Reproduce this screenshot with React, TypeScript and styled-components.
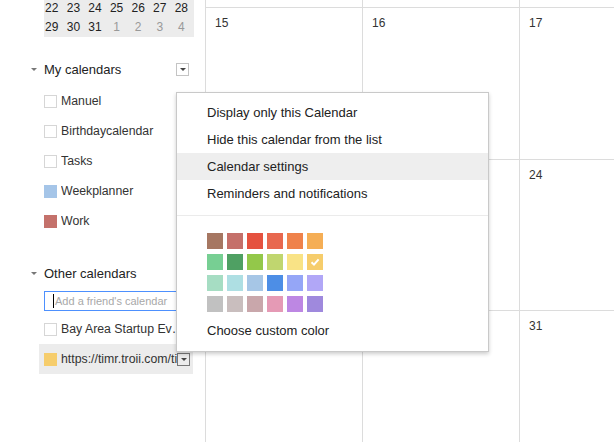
import styled, { createGlobalStyle } from "styled-components";

const GlobalStyle = createGlobalStyle`
  * {
    box-sizing: border-box;
  }
  body {
    margin: 0;
    background: #fff;
    font-family: "Liberation Sans", Arial, sans-serif;
    color: #222;
  }
`;

const Page = styled.div`
  position: relative;
  display: flex;
  width: 614px;
  height: 442px;
  overflow: hidden;
  background: #fff;
`;

const Sidebar = styled.aside`
  width: 205px;
  flex-shrink: 0;
  display: flex;
  flex-direction: column;
`;

const MiniCal = styled.div`
  margin: -2px 0 0 44px;
  width: 150px;
  background: #ececec;
  padding-bottom: 1px;
`;

const MiniWeek = styled.div`
  display: grid;
  grid-template-columns: repeat(7, 21.6px);
  margin-left: -3px;
  height: 19px;
  align-items: center;
`;

const MiniDay = styled.span<{ $muted?: boolean }>`
  text-align: center;
  font-size: 12px;
  color: ${(p) => (p.$muted ? "#999" : "#222")};
`;

const SectionHeader = styled.div<{ $top: number }>`
  display: flex;
  align-items: center;
  height: 20px;
  margin-top: ${(p) => p.$top}px;
  padding-left: 31px;
  width: 189px;
`;

const Caret = styled.span`
  width: 0;
  height: 0;
  border-left: 3px solid transparent;
  border-right: 3px solid transparent;
  border-top: 3px solid #777;
  margin-right: 7px;
`;

const SectionTitle = styled.span`
  font-size: 13px;
  color: #222;
`;

const DropButton = styled.button<{ $dark?: boolean }>`
  width: 13px;
  height: 13px;
  padding: 0;
  margin-left: auto;
  flex-shrink: 0;
  display: flex;
  align-items: center;
  justify-content: center;
  background: transparent;
  border: 1px solid ${(p) => (p.$dark ? "#777" : "#c4c4c4")};

  &::after {
    content: "";
    border-left: 3px solid transparent;
    border-right: 3px solid transparent;
    border-top: 3px solid #444;
  }
`;

const CalList = styled.div<{ $top: number }>`
  display: flex;
  flex-direction: column;
  margin-top: ${(p) => p.$top}px;
`;

const CalRow = styled.div<{ $selected?: boolean }>`
  display: flex;
  align-items: center;
  height: 30px;
  width: 154px;
  margin-left: 39px;
  padding: 0 ${(p) => (p.$selected ? 3 : 7)}px 0 5px;
  background: ${(p) => (p.$selected ? "#ececec" : "transparent")};
`;

const Swatch = styled.span<{ $color?: string }>`
  width: 13px;
  height: 13px;
  flex-shrink: 0;
  background: ${(p) => p.$color || "#fff"};
  border: ${(p) => (p.$color ? "none" : "1px solid #d6d6d6")};
`;

const CalName = styled.span<{ $clip?: boolean }>`
  flex: 1;
  min-width: 0;
  margin-left: 4px;
  font-size: 12.3px;
  color: #333;
  white-space: nowrap;
  overflow: hidden;
  text-overflow: ${(p) => (p.$clip ? "clip" : "ellipsis")};
`;

const FriendField = styled.div`
  display: flex;
  align-items: center;
  margin: 8px 0 0 44px;
  width: 150px;
  height: 20px;
  padding-left: 8px;
  border: 1px solid #4d90fe;
`;

const TextCursor = styled.span`
  width: 1px;
  height: 14px;
  background: #000;
  margin-right: 1px;
`;

const Placeholder = styled.span`
  font-size: 11px;
  color: #a8a8a8;
  white-space: nowrap;
`;

const MonthGrid = styled.div`
  flex: 1;
  display: grid;
  grid-template-columns: repeat(4, 157px);
  grid-template-rows: 8px 152px 151px 160px;
  border-left: 1px solid #dcdcdc;
  overflow: hidden;
`;

const DayCell = styled.div`
  border-right: 1px solid #dcdcdc;
  border-bottom: 1px solid #dcdcdc;
  padding: 5px 0 0 9px;
  overflow: hidden;
`;

const DayNum = styled.span`
  font-size: 12px;
  line-height: 14px;
  color: #333;
`;

const Menu = styled.div`
  position: absolute;
  left: 176px;
  top: 92px;
  width: 313px;
  height: 260px;
  background: #fff;
  border: 1px solid #c9c9c9;
  box-shadow: 0 2px 4px rgba(0, 0, 0, 0.2);
  padding-top: 6px;
`;

const MenuItem = styled.div<{ $active?: boolean }>`
  height: 27px;
  line-height: 27px;
  padding-left: 30px;
  font-size: 13px;
  color: #222;
  background: ${(p) => (p.$active ? "#eeeeee" : "transparent")};
`;

const Separator = styled.div`
  margin-top: 8px;
  border-top: 1px solid #ebebeb;
`;

const Palette = styled.div`
  display: grid;
  grid-template-columns: repeat(6, 16px);
  column-gap: 4px;
  row-gap: 5px;
  margin: 17px 0 0 30px;
`;

const Chip = styled.div<{ $color: string }>`
  width: 16px;
  height: 16px;
  background: ${(p) => p.$color};
  display: flex;
  align-items: center;
  justify-content: center;
`;

const CustomColor = styled.div`
  margin-top: 11px;
  padding-left: 30px;
  line-height: 16px;
  font-size: 13px;
  color: #222;
`;

const miniWeeks = [
  [["22"], ["23"], ["24"], ["25"], ["26"], ["27"], ["28"]],
  [["29"], ["30"], ["31"], ["1", "m"], ["2", "m"], ["3", "m"], ["4", "m"]],
];

const myCalendars = [
  { name: "Manuel" },
  { name: "Birthdaycalendar" },
  { name: "Tasks" },
  { name: "Weekplanner", color: "#a5c5e8" },
  { name: "Work", color: "#c4716b" },
];

// only the dates not hidden behind the menu get a label
const days = [
  "", "", "", "",
  "15", "16", "17", "",
  "", "", "24", "",
  "", "", "31", "",
];

const menuItems = [
  "Display only this Calendar",
  "Hide this calendar from the list",
  "Calendar settings",
  "Reminders and notifications",
];

const colors = [
  "#a67762", "#c5706a", "#e5523f", "#e8684f", "#ef824b", "#f5ae55",
  "#77cf93", "#4fa063", "#93c84a", "#c0d66f", "#f9e386", "#f6cd6c",
  "#a6ddc3", "#aedfe3", "#a6c6e6", "#4d8ee6", "#95a6f7", "#b1a7f7",
  "#c1c1c1", "#c9bebe", "#c9a7ab", "#e59ab5", "#bd87e3", "#9f89dd",
];

function App() {
  return (
    <>
      <GlobalStyle />
      <Page>
        <Sidebar>
          <MiniCal>
            {miniWeeks.map((week, i) => (
              <MiniWeek key={i}>
                {week.map(([d, m]) => (
                  <MiniDay key={d} $muted={m === "m"}>
                    {d}
                  </MiniDay>
                ))}
              </MiniWeek>
            ))}
          </MiniCal>

          <SectionHeader $top={22}>
            <Caret />
            <SectionTitle>My calendars</SectionTitle>
            <DropButton />
          </SectionHeader>
          <CalList $top={7}>
            {myCalendars.map((c) => (
              <CalRow key={c.name}>
                <Swatch $color={c.color} />
                <CalName>{c.name}</CalName>
              </CalRow>
            ))}
          </CalList>

          <SectionHeader $top={27}>
            <Caret />
            <SectionTitle>Other calendars</SectionTitle>
          </SectionHeader>
          <FriendField>
            <TextCursor />
            <Placeholder>Add a friend's calendar</Placeholder>
          </FriendField>
          <CalList $top={3}>
            <CalRow>
              <Swatch />
              <CalName>Bay Area Startup Events</CalName>
            </CalRow>
            <CalRow $selected>
              <Swatch $color="#f6cd6c" />
              <CalName $clip>https://timr.troii.com/timr/calendar</CalName>
              <DropButton $dark />
            </CalRow>
          </CalList>
        </Sidebar>

        <MonthGrid>
          {days.map((d, i) => (
            <DayCell key={i}>{d && <DayNum>{d}</DayNum>}</DayCell>
          ))}
        </MonthGrid>

        <Menu>
          {menuItems.map((item) => (
            <MenuItem key={item} $active={item === "Calendar settings"}>
              {item}
            </MenuItem>
          ))}
          <Separator />
          <Palette>
            {colors.map((c, i) => (
              <Chip key={c} $color={c}>
                {i === 11 && (
                  <svg width="10" height="10" viewBox="0 0 10 10">
                    <polyline
                      points="1.5,5.2 4,7.6 8.6,2.4"
                      fill="none"
                      stroke="#fff"
                      strokeWidth="2"
                    />
                  </svg>
                )}
              </Chip>
            ))}
          </Palette>
          <CustomColor>Choose custom color</CustomColor>
        </Menu>
      </Page>
    </>
  );
}

export default App;
